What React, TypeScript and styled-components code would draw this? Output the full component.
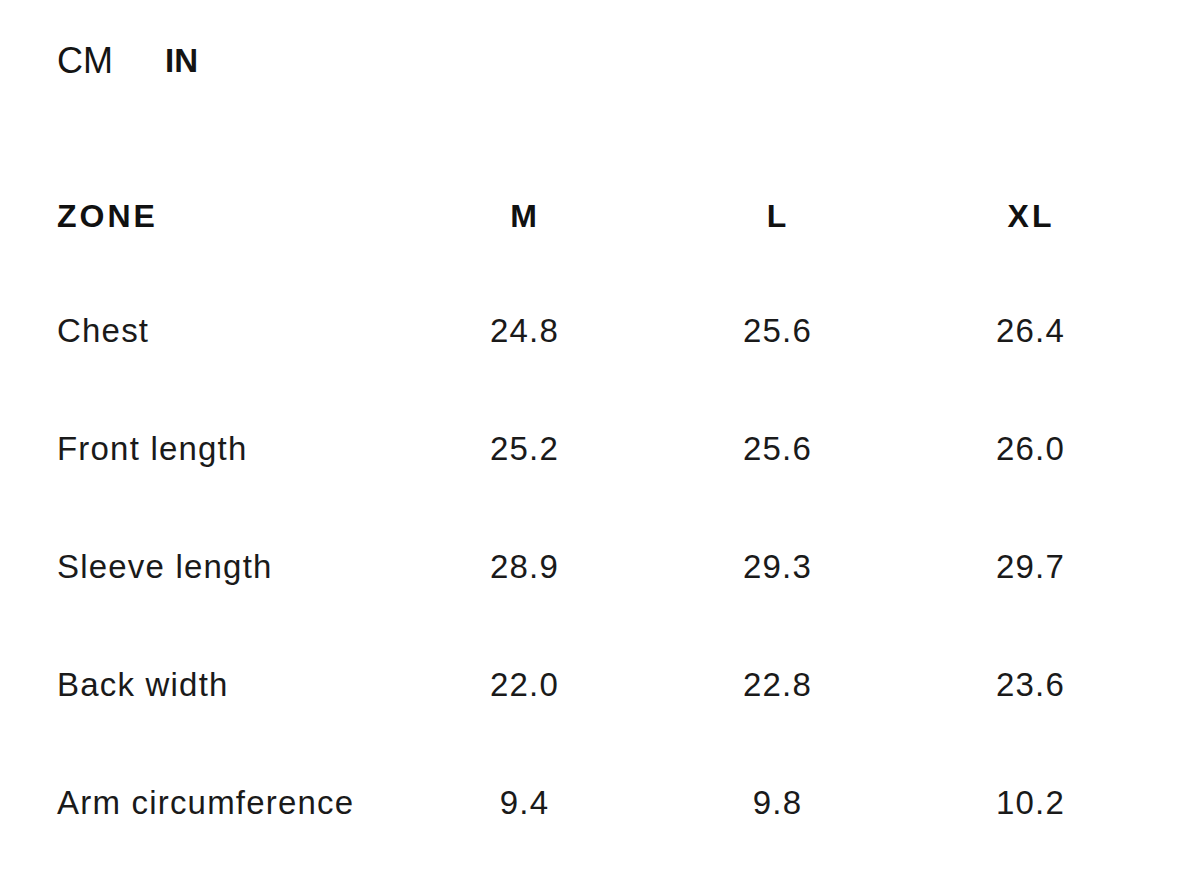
import React from "react";
import styled, { createGlobalStyle } from "styled-components";

const GlobalStyle = createGlobalStyle`
  html, body {
    margin: 0;
    padding: 0;
    background: #ffffff;
  }
  body {
    font-family: "Liberation Sans", Arial, Helvetica, sans-serif;
    color: #141414;
    -webkit-font-smoothing: antialiased;
  }
`;

const Page = styled.div`
  width: 1200px;
  height: 875px;
  box-sizing: border-box;
  padding: 31px 0 0 57px;
  overflow: hidden;
  background: #fff;
`;

const UnitToggle = styled.div`
  display: flex;
  align-items: center;
  gap: 52px;
  height: 60px;
`;

const UnitButton = styled.button<{ $active?: boolean }>`
  border: 0;
  background: none;
  padding: 0;
  margin: 0;
  font-family: inherit;
  font-size: ${(p) => (p.$active ? "33px" : "36px")};
  font-weight: ${(p) => (p.$active ? 700 : 400)};
  line-height: 60px;
  color: #141414;
  cursor: pointer;
`;

const Table = styled.div`
  margin-top: 69px;
  display: grid;
  grid-template-columns: 340px 253px 253px 253px;
  grid-auto-rows: 118px;
  grid-template-rows: 112px;
`;

const HeadCell = styled.div<{ $center?: boolean }>`
  display: flex;
  align-items: center;
  justify-content: ${(p) => (p.$center ? "center" : "flex-start")};
  padding-left: ${(p) => (p.$center ? "3px" : "0")};
  font-size: 32px;
  font-weight: 700;
  letter-spacing: 3px;
  color: #111;
`;

const Cell = styled.div<{ $center?: boolean }>`
  display: flex;
  align-items: center;
  justify-content: ${(p) => (p.$center ? "center" : "flex-start")};
  padding-left: ${(p) => (p.$center ? "2px" : "0")};
  font-size: 33px;
  font-weight: 400;
  letter-spacing: 1.2px;
  color: #1a1a1a;
`;

const sizes = ["M", "L", "XL"];

const rows: [string, string[]][] = [
  ["Chest", ["24.8", "25.6", "26.4"]],
  ["Front length", ["25.2", "25.6", "26.0"]],
  ["Sleeve length", ["28.9", "29.3", "29.7"]],
  ["Back width", ["22.0", "22.8", "23.6"]],
  ["Arm circumference", ["9.4", "9.8", "10.2"]],
];

export default function App() {
  return (
    <>
      <GlobalStyle />
      <Page>
        <UnitToggle>
          <UnitButton>CM</UnitButton>
          <UnitButton $active>IN</UnitButton>
        </UnitToggle>
        <Table>
          <HeadCell>ZONE</HeadCell>
          {sizes.map((s) => (
            <HeadCell key={s} $center>
              {s}
            </HeadCell>
          ))}
          {rows.map(([zone, vals]) => (
            <React.Fragment key={zone}>
              <Cell>{zone}</Cell>
              {vals.map((v, i) => (
                <Cell key={i} $center>
                  {v}
                </Cell>
              ))}
            </React.Fragment>
          ))}
        </Table>
      </Page>
    </>
  );
}
